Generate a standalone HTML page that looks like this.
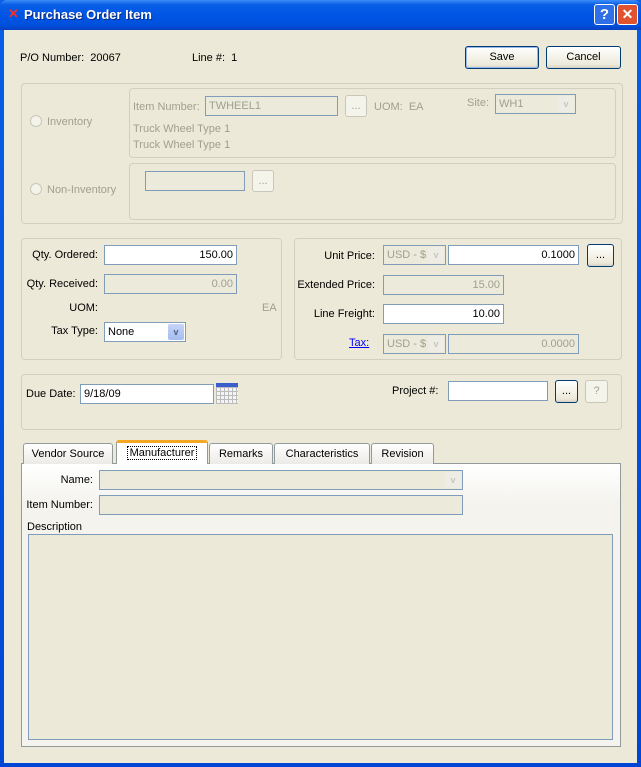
<!DOCTYPE html>
<html><head><style>
*{box-sizing:border-box;margin:0;padding:0}
body{width:641px;height:767px;overflow:hidden;background:#0a246a;font-family:"Liberation Sans",sans-serif;font-size:11px;color:#000;position:relative}
.win{position:absolute;left:0;top:0;width:641px;height:767px;background:linear-gradient(#0a5ee8,#0046d5);}
.title{position:absolute;left:0;top:0;width:641px;height:30px;background:linear-gradient(#3d8ef8 0%,#0a5fe6 15%,#0055e5 50%,#0050dd 85%,#0a3fc0 100%);border-radius:7px 7px 0 0}
.title span{position:absolute;left:24px;top:7px;color:#fff;font-weight:bold;font-size:13px;text-shadow:1px 1px #0a2a80}
.client{position:absolute;left:4px;top:30px;width:633px;height:733px;background:#ece9d8}
.a{position:absolute;white-space:nowrap}
.g{position:absolute;border:1px solid #d0d0bf;border-radius:4px}
.in{position:absolute;background:#fff;border:1px solid #7f9db9;height:20px;padding:0 3px;line-height:18px;text-align:right}
.dis{background:#ebeadb;color:#a0a090}
.btn{position:absolute;border:1px solid #003c74;border-radius:3px;background:linear-gradient(#fff,#ece9d8 85%,#d6d0c5);text-align:center;line-height:20px}
.dbtn{position:absolute;border:1px solid #c9c7ba;border-radius:3px;background:#f5f4ea;color:#a0a090;text-align:center;line-height:20px}
.arr{position:absolute;right:1px;top:1px;bottom:1px;width:16px;background:#eeede5;border-radius:2px;color:#c8c8c0;font-size:9px;text-align:center;line-height:16px;font-weight:bold}
.arrA{background:linear-gradient(#c6d3f7,#a5bdf1);color:#4d6185}
.gray{color:#a0a090}
.tab{position:absolute;top:443px;height:21px;border:1px solid #919b9c;border-bottom:none;border-radius:3px 3px 0 0;background:linear-gradient(#fff,#ecebe6);text-align:center;line-height:20px}
.radio{position:absolute;width:12px;height:12px;border:1px solid #c9c7ba;border-radius:50%;background:#f5f4ea}
</style></head><body>
<div class="win">
<div class="title"><span style="left:8px;top:6px;color:#e33;font-size:13px;text-shadow:none">✕</span><span>Purchase Order Item</span>
<div style="position:absolute;left:594px;top:4px;width:21px;height:21px;border:1px solid #fff;border-radius:3px;background:#2f6fe8;color:#fff;font-weight:bold;font-size:15px;text-align:center;line-height:19px">?</div>
<div style="position:absolute;left:617px;top:4px;width:21px;height:21px;border:1px solid #fff;border-radius:3px;background:#e0532e;color:#fff;font-weight:bold;font-size:14px;text-align:center;line-height:19px">✕</div>
</div>
<div class="client"></div>
</div>
<div class="a" style="left:20px;top:52px">P/O Number:&nbsp; 20067</div>
<div class="a" style="left:192px;top:52px">Line #:&nbsp; 1</div>
<div class="btn" style="left:465px;top:46px;width:74px;height:23px;box-shadow:inset 0 0 0 1px #98b8ea">Save</div>
<div class="btn" style="left:546px;top:46px;width:75px;height:23px">Cancel</div>

<div class="g" style="left:21px;top:83px;width:602px;height:141px"></div>
<div class="g" style="left:129px;top:88px;width:487px;height:70px"></div>
<div class="g" style="left:129px;top:163px;width:487px;height:57px"></div>
<div class="radio" style="left:30px;top:115px"></div><div class="a gray" style="left:47px;top:116px">Inventory</div>
<div class="radio" style="left:30px;top:183px"></div><div class="a gray" style="left:47px;top:184px">Non-Inventory</div>
<div class="a gray" style="left:133px;top:101px">Item Number:</div>
<div class="in dis" style="left:205px;top:96px;width:133px;text-align:left">TWHEEL1</div>
<div class="dbtn" style="left:345px;top:95px;width:22px;height:22px">...</div>
<div class="a gray" style="left:374px;top:101px">UOM:&nbsp; EA</div>
<div class="a gray" style="left:467px;top:97px">Site:</div>
<div class="in dis" style="left:495px;top:94px;width:81px;text-align:left">WH1<div class="arr">v</div></div>
<div class="a gray" style="left:133px;top:123px">Truck Wheel Type 1</div>
<div class="a gray" style="left:133px;top:139px">Truck Wheel Type 1</div>
<div class="in dis" style="left:145px;top:171px;width:100px"></div>
<div class="dbtn" style="left:252px;top:170px;width:22px;height:22px">...</div>

<div class="g" style="left:21px;top:238px;width:261px;height:122px"></div>
<div class="a" style="left:0;width:98px;text-align:right;top:249px">Qty. Ordered:</div>
<div class="in" style="left:104px;top:245px;width:133px">150.00</div>
<div class="a" style="left:0;width:98px;text-align:right;top:278px">Qty. Received:</div>
<div class="in dis" style="left:104px;top:274px;width:133px">0.00</div>
<div class="a" style="left:0;width:98px;text-align:right;top:302px">UOM:</div>
<div class="a gray" style="left:262px;top:302px">EA</div>
<div class="a" style="left:0;width:98px;text-align:right;top:325px">Tax Type:</div>
<div class="in" style="left:104px;top:322px;width:82px;text-align:left">None<div class="arr arrA">v</div></div>

<div class="g" style="left:294px;top:238px;width:328px;height:122px"></div>
<div class="a" style="left:280px;width:95px;text-align:right;top:250px">Unit Price:</div>
<div class="in dis" style="left:383px;top:245px;width:63px;text-align:left">USD - $<div class="arr">v</div></div>
<div class="in" style="left:448px;top:245px;width:131px">0.1000</div>
<div class="btn" style="left:587px;top:244px;width:27px;height:23px">...</div>
<div class="a" style="left:280px;width:95px;text-align:right;top:279px">Extended Price:</div>
<div class="in dis" style="left:383px;top:275px;width:121px">15.00</div>
<div class="a" style="left:280px;width:95px;text-align:right;top:308px">Line Freight:</div>
<div class="in" style="left:383px;top:304px;width:121px">10.00</div>
<div class="a" style="left:349px;top:337px;color:#00f;text-decoration:underline">Tax:</div>
<div class="in dis" style="left:383px;top:334px;width:63px;text-align:left">USD - $<div class="arr">v</div></div>
<div class="in dis" style="left:448px;top:334px;width:131px">0.0000</div>

<div class="g" style="left:21px;top:374px;width:601px;height:56px"></div>
<div class="a" style="left:26px;top:388px">Due Date:</div>
<div class="in" style="left:80px;top:384px;width:134px;text-align:left">9/18/09</div>
<div style="position:absolute;left:216px;top:383px;width:22px;height:21px;border-top:4px solid #3a5fcd;background:repeating-linear-gradient(90deg,#bbb 0 1px,transparent 1px 4px),repeating-linear-gradient(0deg,#bbb 0 1px,#f4f4f4 1px 4px)"></div>
<div class="a" style="left:392px;top:385px">Project #:</div>
<div class="in" style="left:448px;top:381px;width:100px"></div>
<div class="btn" style="left:555px;top:380px;width:23px;height:23px">...</div>
<div class="dbtn" style="left:585px;top:380px;width:23px;height:23px">?</div>

<div style="position:absolute;left:21px;top:463px;width:600px;height:284px;border:1px solid #919b9c;background:linear-gradient(#fff,#f4f3ee 40px,#f4f3ee)"></div>
<div class="tab" style="left:23px;width:90px">Vendor Source</div>
<div class="tab" style="left:116px;top:440px;width:92px;height:24px;background:#fff;border-top:3px solid #f5a623"><span style="border:1px dotted #000;padding:0 2px">Manufacturer</span></div>
<div class="tab" style="left:209px;width:64px">Remarks</div>
<div class="tab" style="left:274px;width:96px">Characteristics</div>
<div class="tab" style="left:371px;width:63px">Revision</div>
<div class="a" style="left:0;width:93px;text-align:right;top:474px">Name:</div>
<div class="in dis" style="left:99px;top:470px;width:364px"><div class="arr">v</div></div>
<div class="a" style="left:0;width:93px;text-align:right;top:499px">Item Number:</div>
<div class="in dis" style="left:99px;top:495px;width:364px"></div>
<div class="a" style="left:27px;top:521px">Description</div>
<div style="position:absolute;left:28px;top:534px;width:585px;height:206px;border:1px solid #7f9db9;background:#ece9d8"></div>
</body></html>
